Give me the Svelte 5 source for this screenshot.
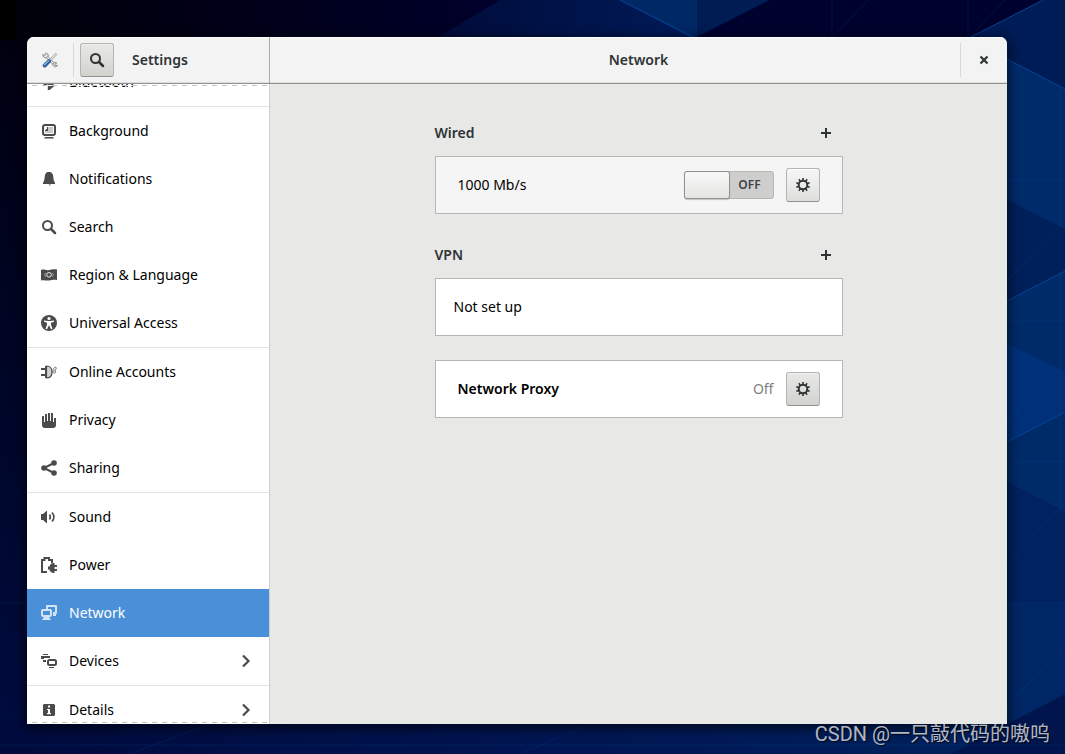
<script>
  const groups = [
    [{ id: 'bluetooth', label: 'Bluetooth' }],
    [
      { id: 'background', label: 'Background' },
      { id: 'notifications', label: 'Notifications' },
      { id: 'search', label: 'Search' },
      { id: 'region', label: 'Region & Language' },
      { id: 'access', label: 'Universal Access' }
    ],
    [
      { id: 'accounts', label: 'Online Accounts' },
      { id: 'privacy', label: 'Privacy' },
      { id: 'sharing', label: 'Sharing' }
    ],
    [
      { id: 'sound', label: 'Sound' },
      { id: 'power', label: 'Power' },
      { id: 'network', label: 'Network' },
      { id: 'devices', label: 'Devices', more: true }
    ],
    [{ id: 'details', label: 'Details', more: true }]
  ];
  let selected = $state('network');
  let wired = $state(false);
</script>

{#snippet icon(id)}
  <svg class="icon" viewBox="0 0 16 16" width="16" height="16" fill="currentColor" aria-hidden="true">
    {#if id === 'bluetooth'}
      <path d="M3 4.500l9 7L8 15V.5l4 4-9 7" fill="none" stroke="currentColor" stroke-width="2.400" />
    {:else if id === 'background'}
      <path fill-rule="evenodd" d="M4 1h8a3 3 0 0 1 3 3v6a3 3 0 0 1-3 3H4a3 3 0 0 1-3-3V4a3 3 0 0 1 3-3zm0 2a1 1 0 0 0-1 1v6a1 1 0 0 0 1 1h8a1 1 0 0 0 1-1V4a1 1 0 0 0-1-1z" />
      <path d="M7 4h5v6H4V8h3z" opacity=".3" /><path d="M4 7h1V6h1V4h1v4H4z" /><path d="M4 14h8l1 1.500H3z" />
    {:else if id === 'notifications'}
      <path d="M8 1c3 0 4 2 4.300 5 .3 3 .7 4.500 1.700 5.500V13H2v-1.500C3 10.500 3.400 9 3.700 6 4 3 5 1 8 1z" /><path d="M7.500 13.500h2.500l-1.200 1.200z" />
    {:else if id === 'search'}
      <circle cx="6.500" cy="6.500" r="4.500" fill="none" stroke="currentColor" stroke-width="2" /><path d="M10 10l4 4" stroke="currentColor" stroke-width="2.500" stroke-linecap="round" />
    {:else if id === 'region'}
      <path d="M0 3c3-1.500 5 1 8 0s5-1 8-.5V13c-3-.8-5 0-8 .5s-5-1-8 0z" />
      <circle cx="8" cy="7.800" r="2.300" fill="none" stroke="#fff" stroke-width="1" opacity=".85" /><path d="M4.500 5.800c-.8 1.300-.8 2.700 0 4M11.500 5.800c.8 1.300.8 2.700 0 4" fill="none" stroke="#fff" stroke-width=".8" opacity=".6" />
    {:else if id === 'access'}
      <circle cx="8" cy="8" r="8" /><circle cx="8" cy="3.500" r="1.600" fill="#fff" /><path d="M3 5.500l4 .5h2l4-.5v1.300l-3 .9v2l1.500 4-1.500.5-2-4-2 4-1.500-.5L6 9.700v-2l-3-.9z" fill="#fff" />
    {:else if id === 'accounts'}
      <path d="M5.500 2v12c4 0 5.500-3 5.500-6s-1.500-6-5.500-6z" fill="currentColor" fill-opacity=".25" stroke="currentColor" stroke-width="1.200" /><path d="M4 2h2v12H4v-2H0v-2h4V6H0V4h4z" /><path d="M10.500 8h1c3 0 0-3 2-4.500 1-1 2 0 1.800 1-.3 1.500-2 .8-1 2.500.8 1.300-.3 2.500-1.800 2" fill="none" stroke="currentColor" stroke-width=".8" />
    {:else if id === 'privacy'}
      <path d="M1 4h2v6h1V2h2v7h1V1h2v8h1V1h2v9h1V6h2v7c0 2-1 3-3 3H4c-2 0-3-1-3-3z" />
    {:else if id === 'sharing'}
      <path d="M13 3L3 8l10 5" fill="none" stroke="currentColor" stroke-width="2" /><circle cx="13" cy="3" r="2.800" /><circle cx="3" cy="8" r="2.800" /><circle cx="13" cy="13" r="2.800" />
    {:else if id === 'sound'}
      <path d="M0 5h2l4-3.500v13L2 11H0z" /><path d="M8.500 5.500c1 1.500 1 3.500 0 5M11 3.500c2.500 3 2.500 6 0 9" fill="none" stroke="currentColor" stroke-width="1.600" />
    {:else if id === 'power'}
      <path d="M6 15H1V3h2.500V1h4.500v2h3v3" fill="none" stroke="currentColor" stroke-width="2" /><path d="M7 9.500h1.500C9 7.500 10.500 6 12.500 6H13.500v2H16v2h-2.500v2H16v2h-2.500v2h-1c-2 0-3.500-1.500-4-3.500H7z" />
    {:else if id === 'network'}
      <path d="M6 4V1h9v7h-3" fill="none" stroke="currentColor" stroke-width="2" stroke-linejoin="round" /><path d="M12 8h3v3h-3z" />
      <rect x="1" y="5" width="9" height="6" rx="1" fill="none" stroke="currentColor" stroke-width="2" /><path d="M3 12h5l2 3H1z" />
    {:else if id === 'devices'}
      <path d="M2 1h5v1H2zM0 3h9v2H3v1H0zM2 7h3v2H2zM8 14h5v1H8z" /><rect x="7" y="7" width="8" height="5" rx="1.500" fill="none" stroke="currentColor" stroke-width="2" />
    {:else if id === 'details'}
      <path fill-rule="evenodd" d="M3 2h10l1 1v10l-1 1H3l-1-1V3zM7 3.500v2h2v-2zM6 7v1h1v3H6v1.200h4V11H9V7z" />
    {:else if id === 'gear'}
      <circle cx="8" cy="8" r="4.300" fill="none" stroke="currentColor" stroke-width="2" />
      {#each [0, 36, 72, 108, 144, 180, 216, 252, 288, 324] as angle}
        <path d="M7.200 1h1.600v2.500H7.200z" transform="rotate({angle} 8 8)" />
      {/each}
    {:else if id === 'plus'}
      <path d="M7 3h2v4h4v2H9v4H7V9H3V7h4z" />
    {:else if id === 'close'}
      <path d="M4.500 4.500l7 7M11.500 4.500l-7 7" stroke="currentColor" stroke-width="2.200" />
    {:else if id === 'next'}
      <path d="M5 2.500L10.500 8 5 13.500" fill="none" stroke="currentColor" stroke-width="2.200" />
    {:else if id === 'tools'}
      <path d="M4.500 4.500l8 8" stroke="#8d908c" stroke-width="2.800" /><path d="M4.500 4.500l8 8" stroke="#eeeeec" stroke-width="1.400" />
      <path d="M.8 2.600l2 .8.800-2.200c2-.3 3 1.300 2.500 3L4.500 5.700C2.500 6.200.6 5 .8 2.600zM10.800 12.500c.2-2 2.200-2.700 4-1.500l-2 1 .4 1.800 2.300-.6c-.5 2.300-4.300 2.300-4.700-.7z" fill="#e4e4e2" stroke="#858884" stroke-width=".9" />
      <path d="M14.700 1.500l-7 7" stroke="#8d908c" stroke-width="2.400" /><path d="M14.700 1.500l-7 7" stroke="#e4e4e2" stroke-width="1.200" />
      <path d="M7 9.200L2.700 13.500" stroke="#2d5c9d" stroke-width="4" stroke-linecap="round" /><path d="M6.500 8.800L2.500 12.800" stroke="#83afe2" stroke-width="1.600" stroke-linecap="round" />
    {/if}
  </svg>
{/snippet}

<div class="desktop">
  <svg class="wallpaper" viewBox="0 0 1065 754" preserveAspectRatio="none" aria-hidden="true">
    <defs>
      <linearGradient id="top" x1="0" x2="1"><stop offset="0" stop-color="#000008" /><stop offset=".45" stop-color="#00002a" /><stop offset="1" stop-color="#00155a" /></linearGradient>
      <linearGradient id="left" x1="0" y1="0" x2="0" y2="1"><stop offset="0" stop-color="#000010" /><stop offset="1" stop-color="#000c40" /></linearGradient>
      <linearGradient id="bottom" x1="0" x2="1"><stop offset="0" stop-color="#000a3c" /><stop offset=".5" stop-color="#001552" /><stop offset="1" stop-color="#00235f" /></linearGradient>
      <linearGradient id="ridge" x1="0" x2="1"><stop offset="0" stop-color="#000a36" /><stop offset="1" stop-color="#001a58" /></linearGradient>
    </defs>
    <rect width="1065" height="754" fill="url(#top)" />
    <path d="M0 0h16v40H0z" fill="#000" />
    <path d="M0 40h60v714H0z" fill="url(#left)" />
    <path d="M500 0h120l73 37v20H405z" fill="url(#ridge)" />
    <path d="M620 0h77v41z" fill="#002865" /><path d="M697 0h73l-73 37z" fill="#001c52" />
    <path d="M770 0h273l-72 37v20H697V37z" fill="#00022e" />
    <path d="M1043 0h22v754h-85V33z" fill="#001c56" />
    <path d="M1007 59l58 30v140l-58-29z" fill="#002b6b" />
    <path d="M1007 200l58 29v42l-58 30z" fill="#00205b" />
    <path d="M1007 301l58-30v100l-58-28z" fill="#002b69" />
    <path d="M1007 343l58 28v41l-58 30z" fill="#00307a" />
    <path d="M1007 442l58-30v100l-58-30z" fill="#002b69" />
    <path d="M1007 482l58 30v91h-58z" fill="#002260" />
    <path d="M1007 603h58v151h-58z" fill="#002765" />
    <path d="M0 720h1065v34H0z" fill="url(#bottom)" />
    <path d="M1065 694v60H951z" fill="#00154e" />
    <path d="M620 0l73 37M1043 0l-72 37M1007 59l58 30M1007 301l58-30M1007 442l58-30" stroke="#074596" fill="none" />
    <path d="M868 0l-35 37M832 0v37M968 0v37M1005 0l-35 37M1007 281l58-61M1007 422l58-58M1007 563l58-60M1007 706l58-61M1007 180h58M1007 321h58M1007 462h58M1007 603h58M0 603h27M0 745h1065M130 754l80-30M520 754l70-30" stroke="#0754a5" opacity=".2" fill="none" />
  </svg>

  <div class="window">
    <header>
      <div class="header-side">
        <div class="app-icon">{@render icon('tools')}</div>
        <button class="square" aria-label="Search settings">{@render icon('search')}</button>
        <h1>Settings</h1>
      </div>
      <div class="header-main">
        <h2>Network</h2>
        <button class="close" aria-label="Close">{@render icon('close')}</button>
      </div>
    </header>

    <div class="panes">
      <nav aria-label="Settings panels">
        <div class="list">
          {#each groups as group}
            <div class="group">
              {#each group as item}
                <button class="row" class:selected={selected === item.id} onclick={() => (selected = item.id)}>
                  {@render icon(item.id)}
                  <span>{item.label}</span>
                  {#if item.more}{@render icon('next')}{/if}
                </button>
              {/each}
            </div>
          {/each}
        </div>
      </nav>

      <main>
        <div class="content">
          <section>
            <div class="heading"><h3>Wired</h3><button class="add" aria-label="Add wired connection">{@render icon('plus')}</button></div>
            <div class="card muted">
              <span class="name">1000 Mb/s</span>
              <label class="switch" class:on={wired}>
                <input type="checkbox" role="switch" aria-label="Wired connection" bind:checked={wired} />
                <span>{wired ? 'ON' : 'OFF'}</span>
              </label>
              <button class="square light" aria-label="Wired options">{@render icon('gear')}</button>
            </div>
          </section>
          <section>
            <div class="heading"><h3>VPN</h3><button class="add" aria-label="Add VPN">{@render icon('plus')}</button></div>
            <div class="card empty"><span class="name">Not set up</span></div>
          </section>
          <section class="card">
            <h3 class="name proxy">Network Proxy</h3>
            <span class="state">Off</span>
            <button class="square" aria-label="Proxy options">{@render icon('gear')}</button>
          </section>
        </div>
      </main>
    </div>
  </div>
  <div class="watermark">CSDN @一只敲代码的嗷呜</div>
</div>

<style>
  :global(body) { margin: 0; }
  .desktop, .desktop * { box-sizing: border-box; }
  .desktop {
    position: relative;
    display: flex;
    height: 100vh;
    padding: 37px 58px 30px 27px;
    overflow: hidden;
    background: #00103f;
    color: #000;
    font: 14px/20px "Noto Sans", "Open Sans", sans-serif;
  }
  .wallpaper { position: absolute; inset: 0; width: 100%; height: 100%; }
  .window {
    position: relative;
    display: flex;
    flex: 1;
    flex-direction: column;
    min-width: 0;
    overflow: hidden;
    border-radius: 7px 7px 0 0;
    background: #e8e8e6;
    box-shadow: 0 3px 12px 2px rgba(0, 0, 0, .6);
  }
  h1, h2, h3 { margin: 0; font-size: 14px; line-height: 20px; font-weight: 600; color: #2e3436; }
  button { margin: 0; padding: 0; border: 0; background: none; color: #2e3436; font: inherit; }
  .icon { display: block; flex: none; }
  header {
    display: flex;
    flex: none;
    height: 47px;
    border-bottom: 1px solid #8f928d;
    background: #f3f3f3;
    box-shadow: inset 0 1px #fff, inset 0 -1px #dededb;
  }
  .header-side {
    display: flex;
    flex: none;
    align-items: center;
    width: 243px;
    padding-left: 15px;
    border-right: 1px solid #a9aca7;
  }
  .app-icon {
    display: flex;
    align-items: center;
    height: 34px;
    padding-right: 15px;
    margin-right: 6px;
    border-right: 1px solid #d8d8d6;
  }
  .header-side h1 { margin-left: 18px; }
  .header-main { display: flex; flex: 1; align-items: center; }
  .header-main h2 { flex: 1; padding-left: 47px; text-align: center; }
  .close {
    display: grid;
    place-items: center;
    width: 47px;
    height: 34px;
    border-left: 1px solid #d8d8d6;
  }
  .square {
    display: grid;
    place-items: center;
    flex: none;
    width: 34px;
    height: 34px;
    border: 1px solid #b3b5b0;
    border-bottom-color: #90938d;
    border-radius: 3px;
    background: linear-gradient(#e8e8e6, #d2d2cf);
    box-shadow: inset 0 1px #f1f1ef;
  }
  .square.light { background: linear-gradient(#f7f7f7, #dededc); box-shadow: inset 0 1px #fff; }
  .panes { display: flex; flex: 1; min-height: 0; }
  nav {
    position: relative;
    flex: none;
    width: 243px;
    overflow: hidden;
    border-right: 1px solid #cfcfcd;
    background: #fff;
  }
  nav::before, nav::after {
    content: "";
    position: absolute;
    left: 0;
    right: 0;
    z-index: 1;
    height: 1px;
    background: repeating-linear-gradient(90deg, #fff 0 5px, #c4c4c4 5px 10px);
  }
  nav::before { top: 1px; }
  nav::after { bottom: 1px; }
  .list { margin-top: -26px; }
  .group + .group { border-top: 1px solid #e2e2e0; }
  .row {
    display: flex;
    align-items: center;
    gap: 12px;
    width: 100%;
    height: 48px;
    padding: 0 15px 0 14px;
    color: #4b4b4b;
    text-align: left;
  }
  .row span { flex: 1; color: #000; }
  .row.selected { background: #4a90d9; color: #d2e3f5; }
  .row.selected span { color: #fff; }
  main { flex: 1; min-width: 0; padding: 32px 24px; overflow: auto; }
  .content { display: grid; gap: 24px; max-width: 408px; margin: 0 auto; }
  .heading { display: flex; align-items: center; justify-content: space-between; height: 34px; margin-bottom: 6px; }
  .add { display: grid; place-items: center; width: 34px; height: 34px; }
  .card {
    display: flex;
    align-items: center;
    gap: 12px;
    height: 58px;
    padding: 0 22px;
    border: 1px solid #b6b6b3;
    background: #fff;
  }
  .card.muted { background: #f5f5f5; }
  .card.empty { padding: 0 18px; }
  .name { flex: 1; }
  .proxy { color: #000; }
  .state { color: #7f7f7f; }
  .switch {
    display: flex;
    align-items: center;
    width: 90px;
    height: 28px;
    border: 1px solid #b6b6b3;
    border-radius: 3px;
    background: #cececc;
    color: #3f4547;
    font-size: 12px;
    font-weight: 600;
  }
  .switch input {
    appearance: none;
    flex: none;
    width: 46px;
    height: 28px;
    margin: 0 0 0 -1px;
    border: 1px solid #8f928d;
    border-radius: 3px;
    background: linear-gradient(#f8f8f8, #e4e4e2);
    box-shadow: 0 1px 1px rgba(0, 0, 0, .2);
  }
  .switch span { flex: 1; padding-right: 3px; text-align: center; }
  .switch.on { flex-direction: row-reverse; background: #4a90d9; color: #fff; }
  .watermark {
    position: absolute;
    right: 15px;
    bottom: 6px;
    color: rgba(225, 228, 235, .8);
    font: 20px/28px Roboto, "Noto Sans CJK SC", sans-serif;
    text-shadow: 1px 1px 1px rgba(0, 0, 0, .7);
    white-space: nowrap;
  }
</style>
